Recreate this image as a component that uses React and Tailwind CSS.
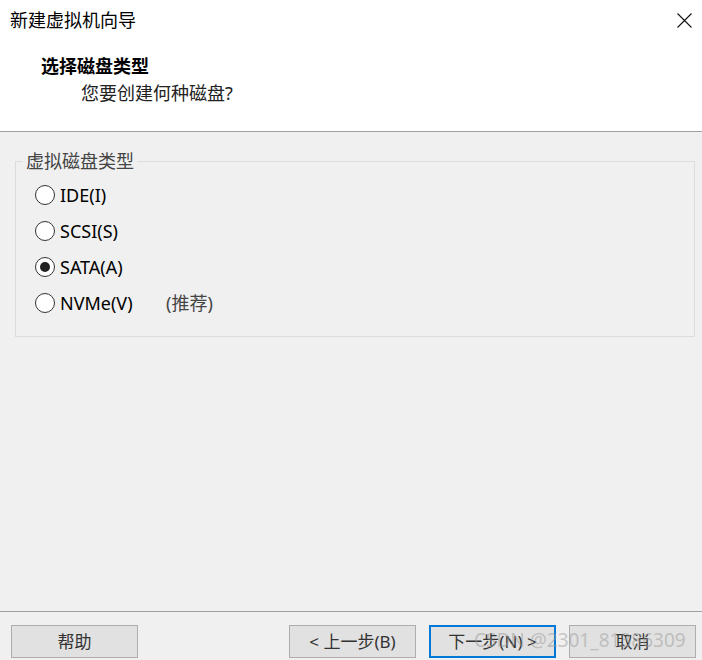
import React from "react";

const font = { fontFamily: '"Noto Sans", "Noto Sans CJK SC", sans-serif' };

const options = [
  { label: "IDE(I)", checked: false },
  { label: "SCSI(S)", checked: false },
  { label: "SATA(A)", checked: true },
  { label: "NVMe(V)", checked: false, note: "(推荐)" },
];

const Radio = ({ checked }) => (
  <span className="w-[20px] h-[20px] rounded-full border border-[#333] bg-white flex items-center justify-center shrink-0">
    {checked && <span className="w-[10px] h-[10px] rounded-full bg-[#222]" />}
  </span>
);

const Button = ({ children, primary }) => (
  <button
    className={
      "w-[127px] h-[33px] bg-[#e1e1e1] text-[17px] text-[#333] flex items-center justify-center " +
      (primary ? "border-2 border-[#0078d7]" : "border border-[#adadad]")
    }
  >
    {children}
  </button>
);

export default function App() {
  return (
    <div
      className="relative w-[702px] h-[660px] flex flex-col bg-[#f0f0f0] overflow-hidden"
      style={font}
    >
      <header className="h-[132px] bg-white border-b border-[#a0a0a0] flex flex-col">
        <div className="h-10 flex items-center justify-between pl-[10px] pr-[10px]">
          <span className="text-[18px] text-black">新建虚拟机向导</span>
          <svg width="15" height="15" viewBox="0 0 15 15" className="mt-[1px]">
            <path d="M0.5 0.5 L14.5 14.5 M14.5 0.5 L0.5 14.5" stroke="#111" strokeWidth="1.1" />
          </svg>
        </div>
        <div className="mt-[14px] pl-[41px] text-[18px] leading-6 font-bold text-black">选择磁盘类型</div>
        <div className="mt-[3px] pl-[81px] text-[18px] leading-6 text-[#222]">您要创建何种磁盘?</div>
      </header>

      <main className="flex-1 pt-[19px]">
        <fieldset className="mx-[15px] w-[680px] border border-[#dcdcdc] pl-[7px] pt-[6px] pb-[15px]">
          <legend className="px-[3px] text-[18px] leading-5 text-[#444]">虚拟磁盘类型</legend>
          {options.map((o) => (
            <div key={o.label} className="h-9 flex items-center gap-[5px] pl-[12px]">
              <Radio checked={o.checked} />
              <span className="w-[101px] text-[18px] text-black">{o.label}</span>
              {o.note && <span className="text-[18px] text-[#444]">{o.note}</span>}
            </div>
          ))}
        </fieldset>
      </main>

      <footer className="h-[49px] border-t border-[#a0a0a0] flex items-start pt-[13px] pl-[11px] pr-[6px]">
        <Button>帮助</Button>
        <div className="ml-auto flex gap-[13px]">
          <Button>&lt; 上一步(B)</Button>
          <Button primary>下一步(N) &gt;</Button>
          <Button>取消</Button>
        </div>
      </footer>

      <span className="absolute left-[474px] top-[628px] text-[19px] leading-6 text-[#9a9a9a]/50 pointer-events-none whitespace-nowrap">
        CSDN @2301_81386309
      </span>
    </div>
  );
}
